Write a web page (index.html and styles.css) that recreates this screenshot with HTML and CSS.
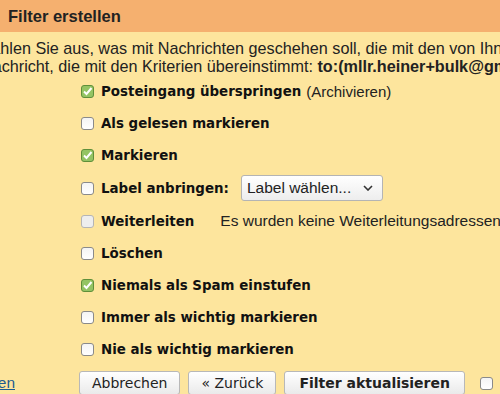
FILE: index.html
```html
<!DOCTYPE html>
<html lang="de">
<head>
    <meta charset="UTF-8">
    <title>Filter erstellen</title>
    <link rel="stylesheet" href="styles.css">
</head>
<body>
    <!-- Title bar -->
    <div class="title-bar">Filter erstellen</div>

    <!-- Intro text -->
    <div class="intro">
        <div class="intro-line first">Wählen Sie aus, was mit Nachrichten geschehen soll, die mit den von Ihnen angegebenen Kriterien übereinstimmen.</div>
        <div class="intro-line second">Nachricht, die mit den Kriterien übereinstimmt: <b>to:(mllr.heiner+bulk@gmail.com)</b></div>
    </div>

    <!-- Filter actions -->
    <div class="actions">
        <div class="action">
            <span class="box checked"><svg viewBox="0 0 13 13" width="13" height="13"><path d="M3 6.5 L5.5 9 L10.5 3" fill="none" stroke="#fff" stroke-width="2"/></svg></span>
            <span class="action-label">Posteingang überspringen</span>
            <span class="note">(Archivieren)</span>
        </div>
        <div class="action">
            <span class="box"></span>
            <span class="action-label">Als gelesen markieren</span>
        </div>
        <div class="action">
            <span class="box checked"><svg viewBox="0 0 13 13" width="13" height="13"><path d="M3 6.5 L5.5 9 L10.5 3" fill="none" stroke="#fff" stroke-width="2"/></svg></span>
            <span class="action-label">Markieren</span>
        </div>
        <div class="action tall">
            <span class="box"></span>
            <span class="action-label">Label anbringen:</span>
            <div class="select">Label wählen... <svg viewBox="0 0 10 6" width="10" height="6"><path d="M1 1 L5 5 L9 1" fill="none" stroke="#333" stroke-width="1.6"/></svg></div>
        </div>
        <div class="action">
            <span class="box disabled"></span>
            <span class="action-label">Weiterleiten</span>
            <span class="forward-note">Es wurden keine Weiterleitungsadressen angegeben.</span>
        </div>
        <div class="action">
            <span class="box"></span>
            <span class="action-label">Löschen</span>
        </div>
        <div class="action">
            <span class="box checked"><svg viewBox="0 0 13 13" width="13" height="13"><path d="M3 6.5 L5.5 9 L10.5 3" fill="none" stroke="#fff" stroke-width="2"/></svg></span>
            <span class="action-label">Niemals als Spam einstufen</span>
        </div>
        <div class="action">
            <span class="box"></span>
            <span class="action-label">Immer als wichtig markieren</span>
        </div>
        <div class="action">
            <span class="box"></span>
            <span class="action-label">Nie als wichtig markieren</span>
        </div>
    </div>

    <!-- Footer buttons -->
    <div class="footer">
        <div class="footer-link"><a href="#">Suchoptionen ausblenden</a></div>
        <button class="btn">Abbrechen</button>
        <button class="btn">« Zurück</button>
        <button class="btn primary">Filter aktualisieren</button>
        <span class="box"></span>
    </div>
</body>
</html>
```

FILE: styles.css
```css
/* General */
body {
    margin: 0;
    background-color: #fde59d;
    font-family: "Liberation Sans", Arial, sans-serif;
    font-size: 15.5px;
    color: #222;
    overflow: hidden;
    height: 394px;
}

/* Title bar */
.title-bar {
    height: 32px;
    line-height: 33px;
    padding-left: 8px;
    background-color: #f5b06f;
    font-weight: bold;
    font-size: 16.5px;
    color: #222;
}

/* Intro */
.intro {
    margin-left: -24px;
    padding-top: 7px;
    font-size: 16.2px;
}

.intro-line {
    white-space: nowrap;
    line-height: 18px;
}

.intro-line.second {
    margin-left: 5px;
}

/* Action list */
.actions {
    padding-left: 81px;
    padding-top: 0;
}

.action {
    display: flex;
    align-items: center;
    height: 32px;
    white-space: nowrap;
}

.action.tall {
    height: 34px;
}

.box {
    display: inline-flex;
    flex: none;
    width: 11px;
    height: 11px;
    border: 1px solid #8a8a8a;
    border-radius: 3px;
    background: linear-gradient(#f4f4f4, #fff);
    margin-right: 7px;
}

.box svg {
    margin: -1px;
}

.box.checked {
    background: #94c463;
    border-color: #5f8f3a;
}

.box.disabled {
    border-color: #b5b5b5;
    background: #eee;
}

.action-label {
    font-family: "DejaVu Sans", sans-serif;
    font-weight: bold;
    font-size: 13.4px;
    color: #111;
}

.note {
    margin-left: 5px;
    font-size: 15px;
}

.forward-note {
    margin-left: 26px;
}

/* Label select */
.select {
    display: flex;
    align-items: center;
    gap: 12px;
    height: 24px;
    margin-left: 12px;
    padding: 0 9px 0 5px;
    border: 1px solid #b4b4b4;
    border-radius: 3px;
    background: linear-gradient(#fff, #ededed);
}

/* Footer */
.footer {
    display: flex;
    align-items: center;
    gap: 8px;
    margin-top: 6px;
    white-space: nowrap;
}

.footer-link {
    width: 15px;
    margin-right: 56px;
    direction: rtl;
    overflow: hidden;
}

.footer-link a {
    color: #1d5c8f;
}

.btn {
    height: 24px;
    padding: 0 12px;
    border: 1px solid #b8b8b8;
    border-radius: 3px;
    background: linear-gradient(#fff, #eaeaea);
    font-family: "DejaVu Sans", sans-serif;
    font-size: 14px;
    color: #222;
}

.btn.primary {
    font-weight: bold;
    padding: 0 14px;
}

.footer .box {
    margin-left: 7px;
}
```
